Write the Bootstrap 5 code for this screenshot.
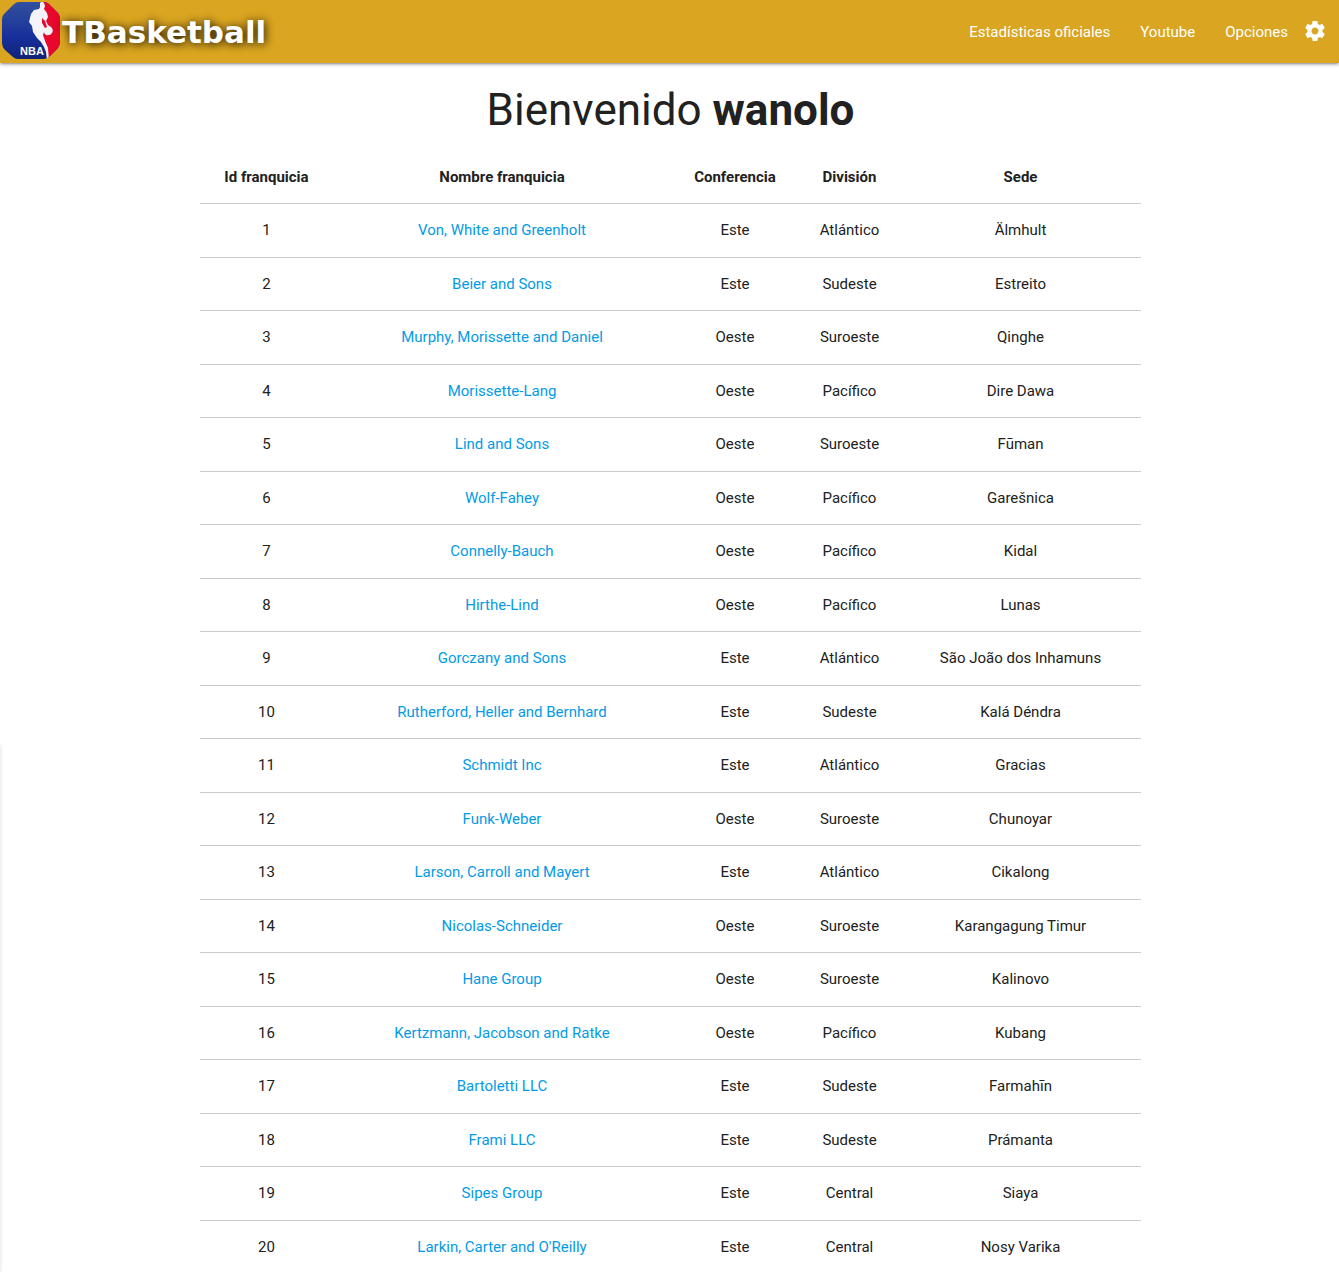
<!DOCTYPE html>
<html lang="es">
<head>
<meta charset="utf-8">
<meta name="viewport" content="width=device-width, initial-scale=1">
<title>TBasketball</title>
<link href="https://cdn.jsdelivr.net/npm/bootstrap@5.3.0/dist/css/bootstrap.min.css" rel="stylesheet">
<style>
  body { font-family: Roboto, sans-serif; font-size: 15px; line-height: 1.5; color: #212121; overflow-x: hidden; }
  .raised, .drawer { box-shadow: 0 2px 2px 0 rgba(0,0,0,.14), 0 3px 1px -2px rgba(0,0,0,.12), 0 1px 5px 0 rgba(0,0,0,.2); }
  .topbar { height: 63px; background: #daa520; }
  .brand { font-family: "DejaVu Sans", sans-serif; font-size: 31px; font-weight: 700; line-height: 64px; color: #fff; text-shadow: 1px 1px 10px #000; }
  .brand svg { width: 62px; height: 62px; }
  .topbar .nav-link { color: #fff; padding: 0 15px; line-height: 64px; }
  .topbar .nav-link svg { width: 24px; height: 24px; margin-left: 15px; }
  .topbar .nav-link:last-child { padding-right: 12px; }
  .welcome { font-size: 44px; margin: 21px 0 14px; }
  .welcome strong { font-weight: 700; }
  main { padding-left: 2px; }
  .sheet { max-width: 941px; }
  .teams { --bs-table-color: #212121; table-layout: fixed; border-color: rgba(0,0,0,.2); }
  .teams > :not(caption) > * > * { padding: 15px 5px; }
  .teams a { color: #039be5; }
  .c-id { width: 133px; } .c-name { width: 338px; } .c-conf { width: 128px; } .c-div { width: 101px; }
  .drawer { width: 300px; left: -301px; top: 744px; bottom: 0; }
</style>
</head>
<body>
<header class="topbar raised d-flex justify-content-between">
  <a class="brand d-flex align-items-start text-decoration-none" href="#">
    <svg viewBox="0 0 62 62" aria-hidden="true">
      <defs>
        <linearGradient id="blue" x1="0" y1="0" x2="0" y2="1"><stop offset="0" stop-color="#3450a0"/><stop offset=".25" stop-color="#28459c"/><stop offset=".6" stop-color="#172f9c"/><stop offset="1" stop-color="#102070"/></linearGradient>
        <clipPath id="badge"><path d="M19 2H44Q47 2 49 4L58 13Q60 16 60 19V42Q60 45 58 48L50 56Q47 59 44 59H18Q15 59 13 57L5 50Q2 47 2 43V19Q2 16 4 14L13 5Q16 2 19 2Z"/></clipPath>
      </defs>
      <g clip-path="url(#badge)">
        <path fill="url(#blue)" d="M0 0H62V62H0Z"/>
        <path fill="#e8082c" d="M44 0H62V62H48L42 30Z"/>
        <path fill="#f4f4f8" d="M40 3Q42 1 44 3L45 6L44 9L47 13L48 17L47 19L46 21L48 25L51 27Q54 30 52 33Q50 36 46 35Q44 34 44 32L43 35L45 41L48 48L49 60H47L46 52L44 47L41 42L37 38L33 32L32 26L29 22L31 14L34 10L39 9L40 7Z"/>
        <path fill="#e8082c" d="M42 18L45 21L47 27L45 28L42 23Z"/>
        <text x="20" y="55" font-family="Liberation Sans, sans-serif" font-weight="700" font-size="11" fill="#fff" style="text-shadow:none">NBA</text>
      </g>
    </svg>
    <span>TBasketball</span>
  </a>
  <nav class="d-flex align-items-start" aria-label="Principal">
    <a class="nav-link" href="#">Estadísticas oficiales</a>
    <a class="nav-link" href="#">Youtube</a>
    <a class="nav-link d-flex align-items-center" href="#">Opciones
      <svg viewBox="0 1 24 24" fill="currentColor" aria-hidden="true"><path d="M19.43 12.98c.04-.32.07-.64.07-.98s-.03-.66-.07-.98l2.11-1.65c.19-.15.24-.42.12-.64l-2-3.46c-.12-.22-.39-.3-.61-.22l-2.49 1c-.52-.4-1.08-.73-1.69-.98l-.38-2.65C14.46 2.18 14.25 2 14 2h-4c-.25 0-.46.18-.49.42l-.38 2.65c-.61.25-1.17.59-1.69.98l-2.49-1c-.23-.09-.49 0-.61.22l-2 3.46c-.13.22-.07.49.12.64l2.11 1.65c-.04.32-.07.65-.07.98s.03.66.07.98l-2.11 1.65c-.19.15-.24.42-.12.64l2 3.46c.12.22.39.3.61.22l2.49-1c.52.4 1.08.73 1.69.98l.38 2.65c.03.24.24.42.49.42h4c.25 0 .46-.18.49-.42l.38-2.65c.61-.25 1.17-.59 1.69-.98l2.49 1c.23.09.49 0 .61-.22l2-3.46c.12-.22.07-.49-.12-.64l-2.11-1.65zM12 15.5c-1.93 0-3.5-1.57-3.5-3.5s1.57-3.5 3.5-3.5 3.5 1.57 3.5 3.5-1.57 3.5-3.5 3.5z"/></svg>
    </a>
  </nav>
</header>
<main>
  <div class="sheet mx-auto text-center">
    <h1 class="welcome fw-normal">Bienvenido <strong>wanolo</strong></h1>
    <table class="teams table text-center align-middle mb-0">
      <colgroup><col class="c-id"><col class="c-name"><col class="c-conf"><col class="c-div"><col></colgroup>
      <thead><tr><th scope="col">Id franquicia</th><th scope="col">Nombre franquicia</th><th scope="col">Conferencia</th><th scope="col">División</th><th scope="col">Sede</th></tr></thead>
      <tbody>
        <tr><td>1</td><td><a class="text-decoration-none" href="#">Von, White and Greenholt</a></td><td>Este</td><td>Atlántico</td><td>Älmhult</td></tr>
        <tr><td>2</td><td><a class="text-decoration-none" href="#">Beier and Sons</a></td><td>Este</td><td>Sudeste</td><td>Estreito</td></tr>
        <tr><td>3</td><td><a class="text-decoration-none" href="#">Murphy, Morissette and Daniel</a></td><td>Oeste</td><td>Suroeste</td><td>Qinghe</td></tr>
        <tr><td>4</td><td><a class="text-decoration-none" href="#">Morissette-Lang</a></td><td>Oeste</td><td>Pacífico</td><td>Dire Dawa</td></tr>
        <tr><td>5</td><td><a class="text-decoration-none" href="#">Lind and Sons</a></td><td>Oeste</td><td>Suroeste</td><td>Fūman</td></tr>
        <tr><td>6</td><td><a class="text-decoration-none" href="#">Wolf-Fahey</a></td><td>Oeste</td><td>Pacífico</td><td>Garešnica</td></tr>
        <tr><td>7</td><td><a class="text-decoration-none" href="#">Connelly-Bauch</a></td><td>Oeste</td><td>Pacífico</td><td>Kidal</td></tr>
        <tr><td>8</td><td><a class="text-decoration-none" href="#">Hirthe-Lind</a></td><td>Oeste</td><td>Pacífico</td><td>Lunas</td></tr>
        <tr><td>9</td><td><a class="text-decoration-none" href="#">Gorczany and Sons</a></td><td>Este</td><td>Atlántico</td><td>São João dos Inhamuns</td></tr>
        <tr><td>10</td><td><a class="text-decoration-none" href="#">Rutherford, Heller and Bernhard</a></td><td>Este</td><td>Sudeste</td><td>Kalá Déndra</td></tr>
        <tr><td>11</td><td><a class="text-decoration-none" href="#">Schmidt Inc</a></td><td>Este</td><td>Atlántico</td><td>Gracias</td></tr>
        <tr><td>12</td><td><a class="text-decoration-none" href="#">Funk-Weber</a></td><td>Oeste</td><td>Suroeste</td><td>Chunoyar</td></tr>
        <tr><td>13</td><td><a class="text-decoration-none" href="#">Larson, Carroll and Mayert</a></td><td>Este</td><td>Atlántico</td><td>Cikalong</td></tr>
        <tr><td>14</td><td><a class="text-decoration-none" href="#">Nicolas-Schneider</a></td><td>Oeste</td><td>Suroeste</td><td>Karangagung Timur</td></tr>
        <tr><td>15</td><td><a class="text-decoration-none" href="#">Hane Group</a></td><td>Oeste</td><td>Suroeste</td><td>Kalinovo</td></tr>
        <tr><td>16</td><td><a class="text-decoration-none" href="#">Kertzmann, Jacobson and Ratke</a></td><td>Oeste</td><td>Pacífico</td><td>Kubang</td></tr>
        <tr><td>17</td><td><a class="text-decoration-none" href="#">Bartoletti LLC</a></td><td>Este</td><td>Sudeste</td><td>Farmahīn</td></tr>
        <tr><td>18</td><td><a class="text-decoration-none" href="#">Frami LLC</a></td><td>Este</td><td>Sudeste</td><td>Prámanta</td></tr>
        <tr><td>19</td><td><a class="text-decoration-none" href="#">Sipes Group</a></td><td>Este</td><td>Central</td><td>Siaya</td></tr>
        <tr><td>20</td><td><a class="text-decoration-none" href="#">Larkin, Carter and O'Reilly</a></td><td>Este</td><td>Central</td><td>Nosy Varika</td></tr>
      </tbody>
    </table>
  </div>
</main>
<div class="drawer position-fixed" aria-hidden="true"></div>
<script src="https://cdn.jsdelivr.net/npm/bootstrap@5.3.0/dist/js/bootstrap.bundle.min.js"></script>
</body>
</html>
